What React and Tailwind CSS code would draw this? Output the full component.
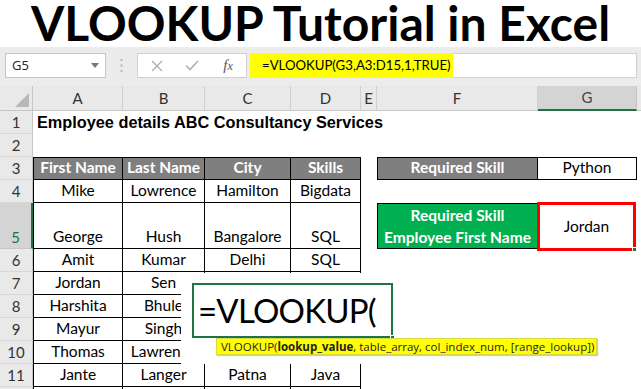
import React from "react";

function RH({ children, sel }) {
  if (sel) {
    return (
      <div className="bg-[#d4d4d4] border-r-2 border-r-[#217346] border-b border-b-[#c6c6c6] flex items-end justify-center pb-[1px] text-[15px] leading-[19px] text-[#217346] font-['Lato',sans-serif]">
        {children}
      </div>
    );
  }
  return (
    <div className="bg-[#e9e9e9] border-r border-r-[#c6c6c6] border-b border-b-[#d6d6d6] flex items-center justify-center text-[15px] leading-[19px] text-[#333] font-['Lato',sans-serif]">
      {children}
    </div>
  );
}

function CH({ children, sel }) {
  if (sel) {
    return (
      <div className="bg-[#d4d4d4] border-r border-r-[#c6c6c6] border-b-2 border-b-[#217346] flex items-center justify-center text-[15px] text-[#444] font-['Lato',sans-serif]">
        {children}
      </div>
    );
  }
  return (
    <div className="bg-[#e9e9e9] border-r border-r-[#cfcfcf] border-b border-b-[#c6c6c6] flex items-center justify-center text-[15px] text-[#333] font-['Lato',sans-serif]">
      {children}
    </div>
  );
}

function T({ children, head, l, t }) {
  const cls =
    "border-r border-b border-black flex justify-center items-end pb-[2px] overflow-hidden whitespace-nowrap text-[15.5px] leading-[19px] font-['Lato',sans-serif] " +
    (l ? "border-l " : "") +
    (t ? "border-t " : "") +
    (head ? "bg-[#7f7f7f] text-white font-bold" : "bg-white text-black");
  return <div className={cls}>{children}</div>;
}

const E = () => <div />;

export default function App() {
  return (
    <div className="relative w-[641px] h-[389px] overflow-hidden bg-white">
      {/* Title */}
      <div className="h-[47px] flex items-start justify-center">
        <span className="-mt-[6px] font-['Lato',sans-serif] font-bold text-[48px] leading-[58px] text-black">
          VLOOKUP Tutorial in Excel
        </span>
      </div>

      {/* Formula bar */}
      <div className="h-[39px] bg-[#ececec] flex items-start pt-[6px]">
        <div className="ml-[5px] w-[101px] h-[25px] bg-white border border-[#c6c6c6] flex items-center justify-between pl-[6px] pr-[6px]">
          <span className="font-['Open_Sans',sans-serif] text-[13px] text-[#222]">G5</span>
          <svg width="8" height="5" viewBox="0 0 8 5">
            <path d="M0 0 L8 0 L4 5 Z" fill="#777" />
          </svg>
        </div>
        <div className="w-[31px] h-[25px] flex items-center justify-center">
          <svg width="3" height="13" viewBox="0 0 3 13">
            <rect x="0.5" y="0" width="2" height="2" fill="#b5b5b5" />
            <rect x="0.5" y="5.5" width="2" height="2" fill="#b5b5b5" />
            <rect x="0.5" y="11" width="2" height="2" fill="#b5b5b5" />
          </svg>
        </div>
        <div className="w-[110px] h-[25px] bg-white border border-[#d0d0d0] flex items-center">
          <div className="w-[36px] flex justify-center pl-[2px]">
            <svg width="12" height="12" viewBox="0 0 12 12">
              <path d="M1 1 L11 11 M11 1 L1 11" stroke="#b0b0b0" strokeWidth="1.4" />
            </svg>
          </div>
          <div className="w-[36px] flex justify-center">
            <svg width="14" height="11" viewBox="0 0 14 11">
              <path d="M1 5.5 L5 9.5 L13 1" stroke="#b0b0b0" strokeWidth="1.6" fill="none" />
            </svg>
          </div>
          <div className="w-[36px] flex justify-center">
            <span className="font-['Liberation_Serif',serif] italic text-[15px] text-[#555] leading-none">
              f<span className="text-[12px]">x</span>
            </span>
          </div>
        </div>
        <div className="ml-[3px] mr-[4px] flex-1 h-[25px] bg-white border border-[#d0d0d0] flex">
          <div className="w-[203px] -ml-[1px] -my-[1px] h-[25px] bg-[#ffff00] flex items-center pl-[12px]">
            <span className="font-['Lato',sans-serif] text-[13.2px] text-black">=VLOOKUP(G3,A3:D15,1,TRUE)</span>
          </div>
        </div>
      </div>

      {/* Sheet grid */}
      <div className="grid grid-cols-[33px_90px_82px_86px_70px_16px_161px_99px_4px] grid-rows-[25px_23px_23px_23px_23px_46px_23px_23px_23px_23px_23px_23px_23px]">
        {/* header row */}
        <div className="bg-[#e9e9e9] border-r border-r-[#c6c6c6] border-b border-b-[#c6c6c6] flex items-end justify-end pr-[3px] pb-[3px]">
          <svg width="14" height="14" viewBox="0 0 14 14">
            <path d="M14 0 L14 14 L0 14 Z" fill="#b8b8b8" />
          </svg>
        </div>
        <CH>A</CH>
        <CH>B</CH>
        <CH>C</CH>
        <CH>D</CH>
        <CH>E</CH>
        <CH>F</CH>
        <CH sel>G</CH>
        <div className="bg-[#e9e9e9] border-b border-b-[#c6c6c6]" />

        {/* row 1 */}
        <RH>1</RH>
        <div className="col-span-7 flex items-center pl-[4px] whitespace-nowrap">
          <span className="font-['Liberation_Sans',Arial,sans-serif] font-bold text-[16.3px] text-black">
            Employee details ABC Consultancy Services
          </span>
        </div>
        <E />

        {/* row 2 */}
        <RH>2</RH>
        <E /><E /><E /><E /><E /><E /><E /><E />

        {/* row 3 */}
        <RH>3</RH>
        <T head l t>First Name</T>
        <T head t>Last Name</T>
        <T head t>City</T>
        <T head t>Skills</T>
        <E />
        <div className="bg-[#7f7f7f] border border-black flex items-end justify-center pb-[2px] text-[15.5px] leading-[19px] font-bold text-white font-['Lato',sans-serif]">
          Required Skill
        </div>
        <div className="bg-white border-t border-r border-b border-black flex items-end justify-center pb-[2px] text-[15.5px] leading-[19px] text-black font-['Lato',sans-serif]">
          Python
        </div>
        <E />

        {/* row 4 */}
        <RH>4</RH>
        <T l>Mike</T>
        <T>Lowrence</T>
        <T>Hamilton</T>
        <T>Bigdata</T>
        <E /><E /><E /><E />

        {/* row 5 */}
        <RH sel>5</RH>
        <T l>George</T>
        <T>Hush</T>
        <T>Bangalore</T>
        <T>SQL</T>
        <E />
        <div className="bg-[#00b050] border border-black flex flex-col items-center justify-center text-[15.5px] leading-[22px] font-bold text-white font-['Lato',sans-serif] whitespace-nowrap">
          <span>Required Skill</span>
          <span>Employee First Name</span>
        </div>
        <div className="relative -ml-[1px] -mt-[1px] -mb-[2px] mr-[1px] border-[3px] border-[#ff0000] bg-white flex items-center justify-center text-[15.5px] text-black font-['Lato',sans-serif]">
          Jordan
          <div className="absolute -right-[4px] -bottom-[4px] w-[5px] h-[5px] bg-[#217346] border border-white" />
        </div>
        <E />

        {/* row 6 */}
        <RH>6</RH>
        <T l>Amit</T>
        <T>Kumar</T>
        <T>Delhi</T>
        <T>SQL</T>
        <E /><E /><E /><E />

        {/* row 7 */}
        <RH>7</RH>
        <T l>Jordan</T>
        <T>Sen</T>
        <T></T>
        <T></T>
        <E /><E /><E /><E />

        {/* row 8 */}
        <RH>8</RH>
        <T l>Harshita</T>
        <T>Bhule</T>
        <T></T>
        <T></T>
        <E /><E /><E /><E />

        {/* row 9 */}
        <RH>9</RH>
        <T l>Mayur</T>
        <T>Singh</T>
        <T></T>
        <T></T>
        <E /><E /><E /><E />

        {/* row 10 */}
        <RH>10</RH>
        <T l>Thomas</T>
        <T>Lawrence</T>
        <T></T>
        <T></T>
        <E /><E /><E /><E />

        {/* row 11 */}
        <RH>11</RH>
        <T l>Jante</T>
        <T>Langer</T>
        <T>Patna</T>
        <T>Java</T>
        <E /><E /><E /><E />

        {/* row 12 (only its top edge shows) */}
        <RH></RH>
        <T l></T>
        <T></T>
        <T></T>
        <T></T>
        <E /><E /><E /><E />
      </div>

      {/* In-cell editor overlay */}
      <div className="absolute left-[181px] top-[273px] w-[211px] h-[91px] bg-white" />
      <div className="absolute left-[192px] top-[283px] w-[201px] h-[55px] border-2 border-[#217346] bg-white flex items-start pl-[4px] pt-[5px]">
        <span className="font-['Lato',sans-serif] text-[33px] leading-[40px] tracking-[-0.8px] text-black">=VLOOKUP(</span>
        <div className="absolute -right-[4px] -bottom-[4px] w-[5px] h-[5px] bg-[#217346] border border-white" />
      </div>

      {/* Tooltip */}
      <div className="absolute left-[216px] top-[338px] w-[381px] h-[17px] bg-[#ffff00] border border-[#d8d840] shadow-[1px_1px_1px_rgba(0,0,0,0.2)] flex items-center pl-[4px] whitespace-nowrap">
        <span className="font-['Open_Sans',sans-serif] text-[11.5px] text-[#222] leading-none">
          VLOOKUP(<b>lookup_value</b>, table_array, col_index_num, [range_lookup])
        </span>
      </div>
    </div>
  );
}
